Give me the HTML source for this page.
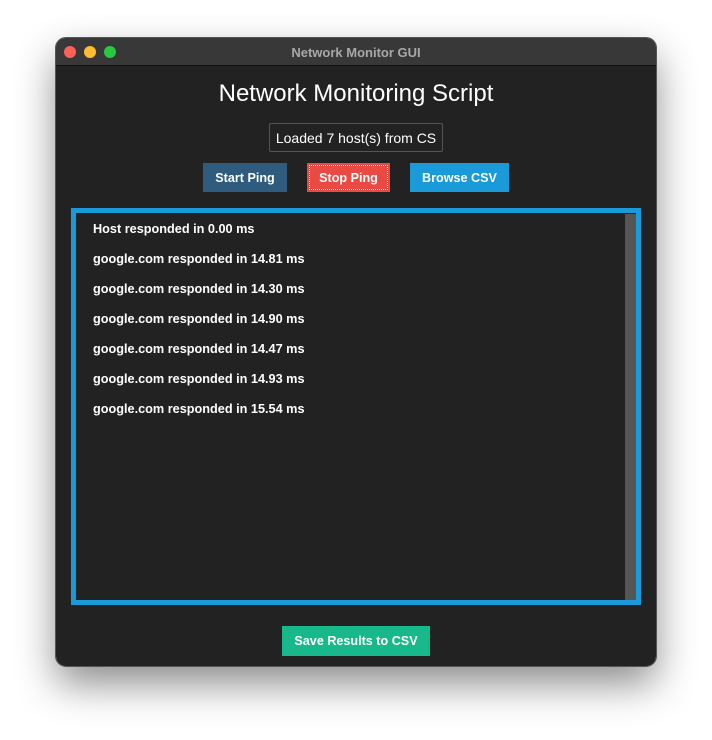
<!DOCTYPE html>
<html><head><style>
body{margin:0;width:712px;height:740px;background:#fff;position:relative;overflow:hidden;font-family:"Liberation Sans",sans-serif}
.win{position:absolute;left:56px;top:38px;width:600px;height:628px;background:#222;border-radius:10px;box-shadow:0 18px 40px rgba(0,0,0,.45);outline:1px solid #555;overflow:hidden}
.tb{height:28px;background:#383838;border-bottom:1px solid #111;position:relative;box-sizing:border-box}
.dot{position:absolute;top:8px;width:12px;height:12px;border-radius:50%}
.tt{position:absolute;left:0;right:0;top:7px;text-align:center;color:#a8a8a8;font-weight:bold;font-size:13px}
.a{position:absolute;color:#fff}
.btn{position:absolute;top:125px;height:29px;color:#fff;font-size:12.6px;font-weight:bold;display:flex;align-items:center;justify-content:center;box-sizing:border-box}
.box{position:absolute;left:15px;top:170px;width:570px;height:397px;border:5px solid #1a9ad8;box-sizing:border-box;background:#222}
.ln{position:absolute;left:17px;color:#fff;font-size:12.7px;font-weight:bold}
</style></head><body>
<div class="win">
 <div class="tb">
  <div class="dot" style="left:8px;background:#fe5f57"></div>
  <div class="dot" style="left:28px;background:#febc2e"></div>
  <div class="dot" style="left:48px;background:#28c840"></div>
  <div class="tt">Network Monitor GUI</div>
 </div>
 <div class="a" style="left:0;right:0;top:42px;text-align:center;font-size:24px">Network Monitoring Script</div>
 <div class="a" style="left:213px;top:85px;width:174px;height:29px;border:1px solid #555;box-sizing:border-box;border-radius:2px;font-size:14px;display:flex;align-items:center;justify-content:center">Loaded 7 host(s) from CS</div>
 <div class="btn" style="left:147px;width:84px;background:#2f5b7e">Start Ping</div>
 <div class="btn" style="left:251px;width:83px;background:#ea4a43;outline:1px dotted #fff;outline-offset:-3px">Stop Ping</div>
 <div class="btn" style="left:354px;width:99px;background:#1a9ad8">Browse CSV</div>
 <div class="box">
  <div class="ln" style="top:9px">Host responded in 0.00 ms</div>
  <div class="ln" style="top:39px">google.com responded in 14.81 ms</div>
  <div class="ln" style="top:69px">google.com responded in 14.30 ms</div>
  <div class="ln" style="top:99px">google.com responded in 14.90 ms</div>
  <div class="ln" style="top:129px">google.com responded in 14.47 ms</div>
  <div class="ln" style="top:159px">google.com responded in 14.93 ms</div>
  <div class="ln" style="top:189px">google.com responded in 15.54 ms</div>
  <div style="position:absolute;left:549px;top:1px;width:11px;height:386px;background:#555"></div>
 </div>
 <div class="btn" style="left:226px;top:588px;width:148px;height:30px;background:#17b889">Save Results to CSV</div>
</div>
</body></html>
